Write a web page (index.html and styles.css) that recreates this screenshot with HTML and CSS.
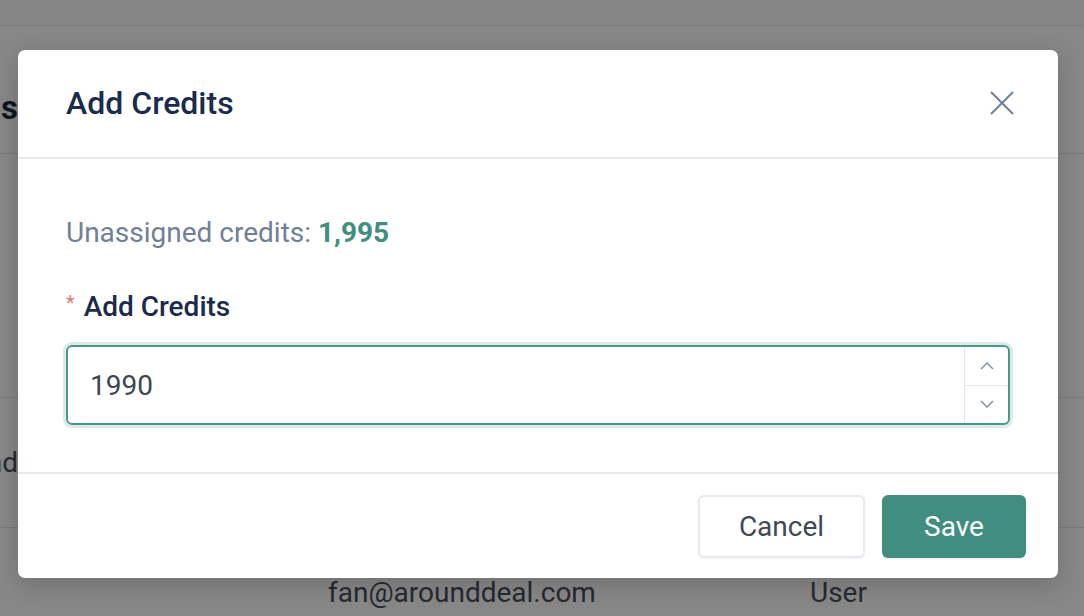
FILE: index.html
```html
<!DOCTYPE html>
<html>
<head>
<meta charset="utf-8">
<link rel="stylesheet" href="styles.css">
</head>
<body>
<div class="page">
  <div class="topbar"></div>
  <div class="title-row"><div class="clip"><span class="page-title">Users</span></div></div>
  <div class="table-head"></div>
  <div class="row row-one"><div class="clip"><span class="cell">Arounddeal Brand</span></div></div>
  <div class="row row-two">
    <span class="email">fan@arounddeal.com</span>
    <span class="role">User</span>
  </div>
</div>
<div class="overlay"></div>
<div class="modal">
  <div class="modal-header">
    <h2 class="modal-title">Add Credits</h2>
    <button class="close" aria-label="Close">
      <svg width="26" height="26" viewBox="0 0 26 26"><path d="M2 2 L24 24 M24 2 L2 24" stroke="#718096" stroke-width="2" fill="none"/></svg>
    </button>
  </div>
  <div class="modal-body">
    <p class="unassigned">Unassigned credits: <strong>1,995</strong></p>
    <label class="field-label"><span class="req">*</span>Add Credits</label>
    <div class="number-input">
      <div class="value">1990</div>
      <div class="stepper">
        <div class="step">
          <svg width="14" height="8" viewBox="0 0 14 8"><path d="M1 7 L7 1 L13 7" stroke="#7d8ba0" stroke-width="1.4" fill="none"/></svg>
        </div>
        <div class="step step-down">
          <svg width="14" height="8" viewBox="0 0 14 8"><path d="M1 1 L7 7 L13 1" stroke="#7d8ba0" stroke-width="1.4" fill="none"/></svg>
        </div>
      </div>
    </div>
  </div>
  <div class="modal-footer">
    <button class="btn btn-cancel">Cancel</button>
    <button class="btn btn-save">Save</button>
  </div>
</div>
</body>
</html>
```

FILE: styles.css
```css
* { box-sizing: border-box; }
html, body { margin: 0; padding: 0; overflow: hidden; }
body {
  width: 1084px;
  height: 616px;
  font-family: Roboto, "Liberation Sans", sans-serif;
  background: #ffffff;
  position: relative;
}
.page { width: 1084px; }
.topbar { height: 26px; border-bottom: 1px solid #e2e6ec; background: #fdfdfd; }
.title-row {
  height: 128px;
  border-bottom: 1px solid #e2e6ec;
  display: flex;
  align-items: center;
  padding-top: 36px;
}
.clip { width: 18px; display: flex; justify-content: flex-end; white-space: nowrap; }
.page-title { font-size: 33px; font-weight: 700; color: #1d2a44; letter-spacing: 3px; margin-right: -3px; }
.table-head { height: 244px; border-bottom: 1px solid #e2e6ec; }
.row { height: 130px; border-bottom: 1px solid #e2e6ec; display: flex; align-items: center; }
.cell { font-size: 28px; color: #4a505c; }
.row-two { height: 89px; border-bottom: 0; align-items: flex-end; padding-bottom: 8px; }
.email { font-size: 28px; color: #4a505c; margin-left: 328px; width: 482px; }
.role { font-size: 28px; color: #4a505c; }
.overlay {
  position: absolute;
  inset: 0;
  background: rgba(0, 0, 0, 0.47);
}
.modal {
  position: absolute;
  left: 18px;
  top: 50px;
  width: 1040px;
  height: 528px;
  background: #fff;
  border-radius: 7px;
  box-shadow: 0 6px 24px rgba(0, 0, 0, 0.18);
  display: flex;
  flex-direction: column;
}
.modal-header {
  height: 109px;
  border-bottom: 2px solid #e6eaef;
  display: flex;
  align-items: center;
  justify-content: space-between;
  padding: 0 43px 2px 48px;
}
.modal-title {
  margin: 0;
  font-size: 32px;
  font-weight: 500;
  color: #1b2b4d;
}
.close {
  border: 0;
  background: none;
  padding: 0;
  width: 26px;
  height: 26px;
  display: flex;
}
.modal-body {
  padding: 54px 48px 0 48px;
  height: 315px;
  border-bottom: 2px solid #e6eaef;
}
.unassigned {
  margin: 0;
  height: 40px;
  line-height: 40px;
  font-size: 28px;
  color: #718096;
}
.unassigned strong { color: #3f8e80; font-weight: 700; }
.field-label {
  display: flex;
  align-items: center;
  margin-top: 33px;
  height: 40px;
  font-size: 28px;
  font-weight: 500;
  color: #1b2b4d;
}
.req { color: #e57373; font-size: 20px; margin-right: 9px; font-weight: 400; position: relative; top: -3px; }
.number-input {
  margin-top: 19px;
  height: 80px;
  border: 2px solid #4a9a8b;
  border-radius: 6px;
  box-shadow: 0 0 0 3px #dcebe8;
  display: flex;
}
.value {
  flex: 1;
  display: flex;
  align-items: center;
  padding-left: 22px;
  font-size: 28px;
  color: #3b4652;
}
.stepper {
  width: 44px;
  border-left: 1px solid #e3e8ef;
  display: flex;
  flex-direction: column;
}
.step { flex: 1; display: flex; align-items: center; justify-content: center; }
.step-down { border-top: 1px solid #e3e8ef; }
.modal-footer {
  flex: 1;
  display: flex;
  align-items: center;
  justify-content: flex-end;
  gap: 17px;
  padding: 0 32px 0 0;
}
.btn {
  font-family: Roboto, "Liberation Sans", sans-serif;
  font-size: 28px;
  border-radius: 6px;
  height: 63px;
  cursor: pointer;
}
.btn-cancel {
  width: 167px;
  background: #fff;
  border: 2px solid #e6eaef;
  color: #3f4a57;
  box-shadow: 0 1px 2px rgba(0,0,0,0.05);
}
.btn-save {
  width: 144px;
  background: #418e81;
  border: 0;
  color: #fff;
  font-weight: 400;
  box-shadow: 0 1px 2px rgba(0,0,0,0.08);
}
```
